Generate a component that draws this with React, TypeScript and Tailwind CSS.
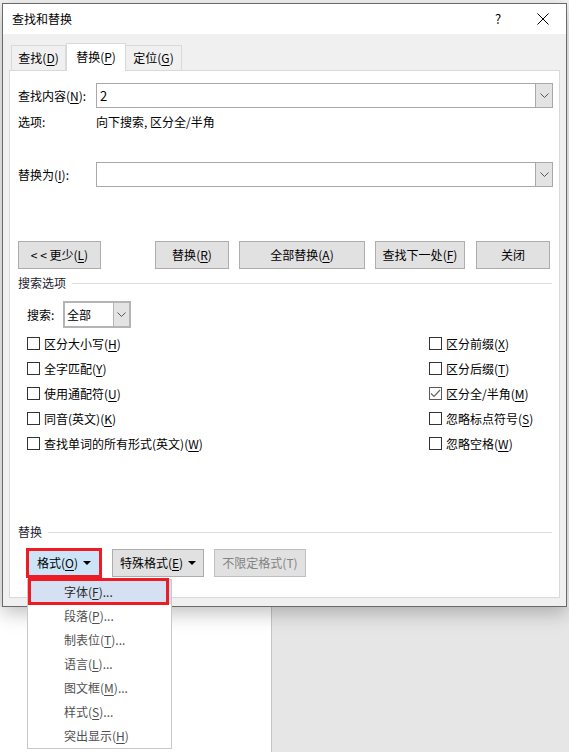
import React from "react";

const Key = ({ k }: { k: string }) => (
  <>
    (<span className="underline underline-offset-[2px]">{k}</span>)
  </>
);

const Chevron = () => (
  <svg width="9" height="5" viewBox="0 0 9 5" fill="none">
    <path d="M0.5 0.5 L4.5 4.5 L8.5 0.5" stroke="#555" strokeWidth="1" />
  </svg>
);

const Caret = () => (
  <svg width="8" height="4" viewBox="0 0 8 4" className="ml-[5px]">
    <path d="M0 0 H8 L4 4 Z" fill="#000" />
  </svg>
);

const Combo = ({ value, className = "" }: { value?: string; className?: string }) => (
  <div className={`flex h-[25px] border border-[#a9a9a9] bg-white ${className}`}>
    <div className="flex-1 flex items-center px-[3px] text-[13px] text-black">{value}</div>
    <div className="w-[17px] flex items-center justify-center bg-[#e3e3e3] border-l border-[#a9a9a9]">
      <Chevron />
    </div>
  </div>
);

const Btn = ({
  children,
  className = "",
}: {
  children: React.ReactNode;
  className?: string;
}) => (
  <div
    className={`h-[28px] flex items-center justify-center bg-[#e1e1e1] border border-[#adadad] text-[12px] text-black ${className}`}
  >
    {children}
  </div>
);

const Check = ({ label, k, checked }: { label: string; k: string; checked?: boolean }) => (
  <div className="h-[25px] flex items-center gap-[4px]">
    <div
      className={`w-[13px] h-[13px] bg-white border flex items-center justify-center ${
        checked ? "border-[#5a5a5a]" : "border-[#333]"
      }`}
    >
      {checked && (
        <svg width="11" height="9" viewBox="0 0 11 9" fill="none">
          <path d="M1 4.5 L4 7.5 L10 1" stroke="#666" strokeWidth="1.2" />
        </svg>
      )}
    </div>
    <span>
      {label}
      <Key k={k} />
    </span>
  </div>
);

const Section = ({ title }: { title: string }) => (
  <div className="flex items-center h-[16px] pl-[8px] pr-[7px] text-[#1b1b2e]">
    <span>{title}</span>
    <div className="flex-1 h-px bg-[#dcdcdc] ml-[6px]" />
  </div>
);

const leftChecks = [
  { label: "区分大小写", k: "H" },
  { label: "全字匹配", k: "Y" },
  { label: "使用通配符", k: "U" },
  { label: "同音(英文)", k: "K" },
  { label: "查找单词的所有形式(英文)", k: "W" },
];

const rightChecks = [
  { label: "区分前缀", k: "X" },
  { label: "区分后缀", k: "T" },
  { label: "区分全/半角", k: "M", checked: true },
  { label: "忽略标点符号", k: "S" },
  { label: "忽略空格", k: "W" },
];

const menuItems = [
  { label: "字体", k: "F", dots: true },
  { label: "段落", k: "P", dots: true },
  { label: "制表位", k: "T", dots: true },
  { label: "语言", k: "L", dots: true },
  { label: "图文框", k: "M", dots: true },
  { label: "样式", k: "S", dots: true },
  { label: "突出显示", k: "H", dots: false },
];

export default function App() {
  return (
    <div className="relative w-[569px] h-[752px] overflow-hidden bg-[#f3f3f3] flex flex-col font-['Noto_Sans_CJK_SC','Noto_Sans',sans-serif] text-[12px] leading-[16px] text-black">
      {/* dialog */}
      <div className="relative z-10 mt-[3px] ml-[2px] w-[565px] h-[604px] border border-[#6a6a6a] bg-[#f0f0f0] flex flex-col shadow-[0_6px_18px_rgba(0,0,0,0.25)]">
        <div className="h-[30px] bg-white flex items-center justify-between">
          <span className="pl-[9px] text-[12px]">查找和替换</span>
          <div className="flex h-full">
            <div className="w-[44px] flex items-center justify-center text-[13px]">?</div>
            <div className="w-[46px] flex items-center justify-center">
              <svg width="12" height="12" viewBox="0 0 12 12">
                <path d="M0.5 0.5 L11.5 11.5 M11.5 0.5 L0.5 11.5" stroke="#000" strokeWidth="1" />
              </svg>
            </div>
          </div>
        </div>

        {/* tabs */}
        <div className="pt-[9px] pl-[8px] flex items-end h-[36px]">
          <div className="w-[55px] h-[25px] border border-b-0 border-[#d9d9d9] bg-[#f0f0f0] flex items-center justify-center">
            查找<Key k="D" />
          </div>
          <div className="relative z-10 w-[60px] h-[28px] -mb-px border border-b-0 border-[#d9d9d9] bg-white flex items-center justify-center pb-[2px]">
            替换<Key k="P" />
          </div>
          <div className="w-[56px] h-[25px] border border-b-0 border-l-0 border-[#d9d9d9] bg-[#f0f0f0] flex items-center justify-center">
            定位<Key k="G" />
          </div>
        </div>

        {/* panel */}
        <div className="mx-[6px] h-[528px] border border-[#d9d9d9] bg-white flex flex-col">
          <div className="mt-[12px] flex items-center pl-[8px] pr-[6px]">
            <span className="w-[78px]">
              查找内容<Key k="N" />:
            </span>
            <Combo value="2" className="flex-1" />
          </div>
          <div className="mt-[6px] flex items-center pl-[8px]">
            <span className="w-[78px]">选项:</span>
            <span>向下搜索, 区分全/半角</span>
          </div>
          <div className="mt-[32px] flex items-center pl-[8px] pr-[6px]">
            <span className="w-[78px]">
              替换为<Key k="I" />:
            </span>
            <Combo className="flex-1" />
          </div>

          <div className="mt-[54px] flex items-center pl-[8px]">
            <Btn className="w-[83px]">
              &lt; &lt;&nbsp;更少<Key k="L" />
            </Btn>
            <Btn className="w-[74px] ml-[54px]">
              替换<Key k="R" />
            </Btn>
            <Btn className="w-[126px] ml-[10px]">
              全部替换<Key k="A" />
            </Btn>
            <Btn className="w-[90px] ml-[10px]">
              查找下一处<Key k="F" />
            </Btn>
            <Btn className="w-[74px] ml-[11px]">关闭</Btn>
          </div>

          <div className="mt-[6px]">
            <Section title="搜索选项" />
          </div>

          <div className="mt-[10px] flex items-center pl-[17px]">
            <span className="w-[36px]">搜索:</span>
            <div className="flex h-[27px] w-[68px] border-2 border-[#b4b4b4] bg-white">
              <div className="flex-1 flex items-center pl-[2px]">全部</div>
              <div className="w-[16px] flex items-center justify-center bg-[#e3e3e3] border-l border-[#b4b4b4]">
                <Chevron />
              </div>
            </div>
          </div>

          <div className="mt-[3px] flex pl-[17px]">
            <div className="w-[402px] flex flex-col">
              {leftChecks.map((c) => (
                <Check key={c.label} label={c.label} k={c.k} />
              ))}
            </div>
            <div className="flex flex-col">
              {rightChecks.map((c) => (
                <Check key={c.label} label={c.label} k={c.k} checked={c.checked} />
              ))}
            </div>
          </div>

          <div className="mt-[68px]">
            <Section title="替换" />
          </div>

          <div className="mt-[8px] flex items-center pl-[16px]">
            <div className="w-[76px] h-[30px] border-[3px] border-[#ed1c24] bg-[#cce4f7] flex items-center justify-center">
              格式<Key k="O" />
              <Caret />
            </div>
            <Btn className="w-[92px] h-[27px] ml-[10px]">
              特殊格式<Key k="E" />
              <Caret />
            </Btn>
            <Btn className="w-[92px] h-[27px] ml-[10px] !border-[#bfbfbf] !text-[#838383]">
              不限定格式(T)
            </Btn>
          </div>
        </div>
      </div>

      {/* window behind the dialog */}
      <div className="flex-1 flex">
        <div className="w-[272px] bg-white border-r border-[#c4c4c4]" />
        <div className="flex-1 bg-[#e6e6e6]" />
      </div>

      {/* dropdown menu */}
      <div className="absolute z-20 left-[27px] top-[579px] w-[145px] h-[170px] bg-white border border-[#c8c8c8] flex flex-col">
        {menuItems.map((m, i) => (
          <div
            key={m.label}
            className={`h-[24px] flex items-center pl-[36px] ${
              i === 0 ? "bg-[#d5e1f2] text-[#2a2a2a]" : "text-[#505050]"
            }`}
          >
            {m.label}
            <Key k={m.k} />
            {m.dots ? "..." : ""}
          </div>
        ))}
        <div className="absolute left-0 -top-[2px] w-[141px] h-[27px] border-[3px] border-[#ed1c24]" />
      </div>
    </div>
  );
}
